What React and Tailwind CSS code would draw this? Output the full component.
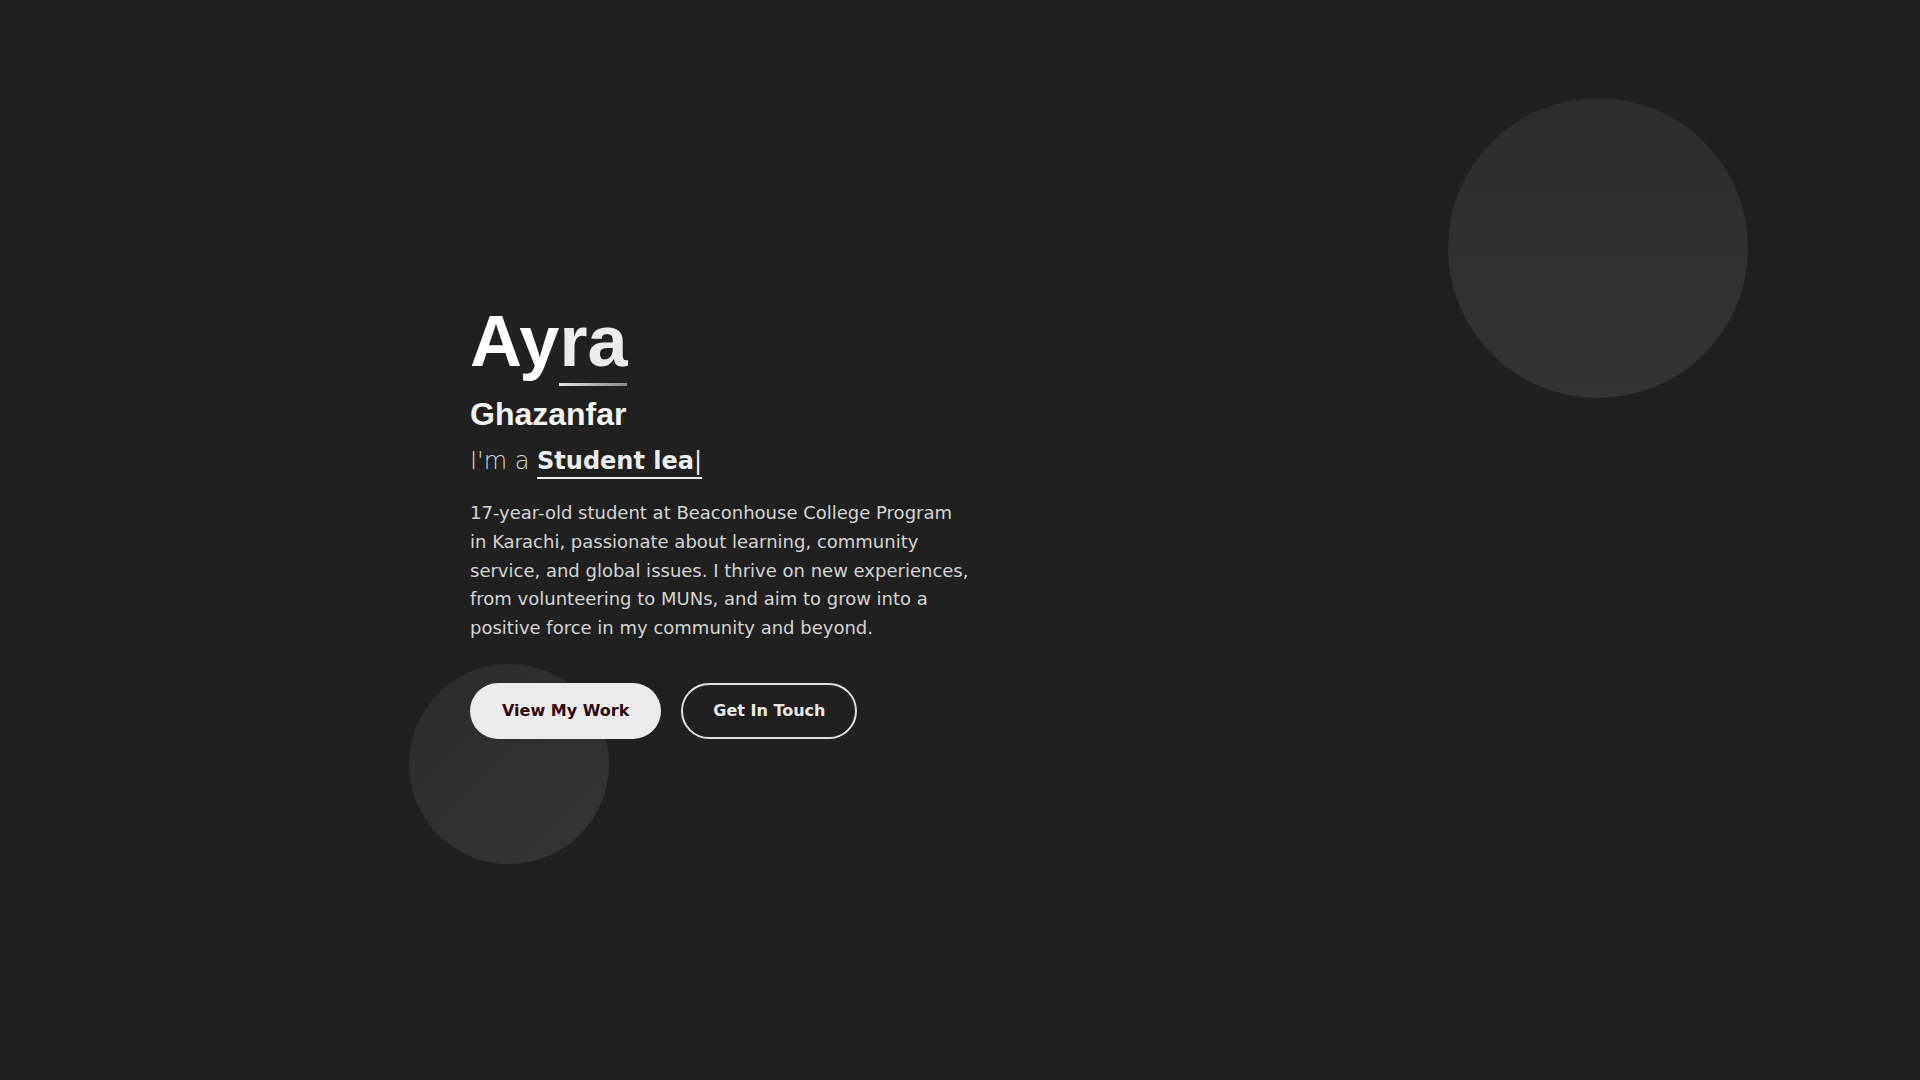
import React from 'react';

const FONT = { fontFamily: '"DejaVu Sans", "Liberation Sans", sans-serif' };
const HEAD = { fontFamily: '"Liberation Sans", Arial, sans-serif' };

export default function App() {
  return (
    <div className="bg-[#202020] text-white min-h-screen" style={FONT}>
      <section className="relative h-screen flex items-center pb-9 overflow-hidden">
        {/* decorative circles */}
        <div className="absolute left-[1448px] top-[98px] w-[300px] h-[300px] rounded-full bg-gradient-to-b from-[#2c2c2c] to-[#333333]" />
        <div className="absolute left-[409px] top-[664px] w-[200px] h-[200px] rounded-full bg-gradient-to-br from-[#2b2b2b] to-[#353535]" />

        <div className="relative w-full max-w-[980px] mx-auto">
          <h1 className="text-[72px] leading-none font-bold" style={HEAD}>
            <span className="text-white">Ay</span>
            <span className="relative inline-block text-[#ececec]">
              ra
              <span className="absolute left-0 right-0 top-[78px] h-[3px] bg-gradient-to-r from-[#e6e6e6] to-[#8a8a8a]" />
            </span>
          </h1>
          <h2 className="mt-[19px] text-[32px] leading-[36px] font-bold text-[#f2f2f2]" style={HEAD}>Ghazanfar</h2>
          <p className="mt-[11px] text-[24px] leading-[36px]">
            <span className="font-extralight text-[#d6d6d6]">I'm a </span>
            <span className="font-bold text-[#ececec] underline decoration-2 underline-offset-[8px]">
              Student lea<span className="font-normal">|</span>
            </span>
          </p>
          <p className="mt-5 max-w-[500px] text-[18px] leading-[28.8px] text-[#d4d4d4]">
            17-year-old student at Beaconhouse College Program in Karachi, passionate about learning, community service, and global issues. I thrive on new experiences, from volunteering to MUNs, and aim to grow into a positive force in my community and beyond.
          </p>
          <div className="mt-10 flex gap-5">
            <button className="h-14 px-8 rounded-full bg-[#ebebeb] text-[#2e0a10] font-bold text-base">
              View My Work
            </button>
            <button className="h-14 px-[30px] rounded-full border-2 border-[#e0e0e0] text-[#e8e8e8] font-bold text-base">
              Get In Touch
            </button>
          </div>
        </div>
      </section>
      <div className="h-[7900px]" />
    </div>
  );
}
